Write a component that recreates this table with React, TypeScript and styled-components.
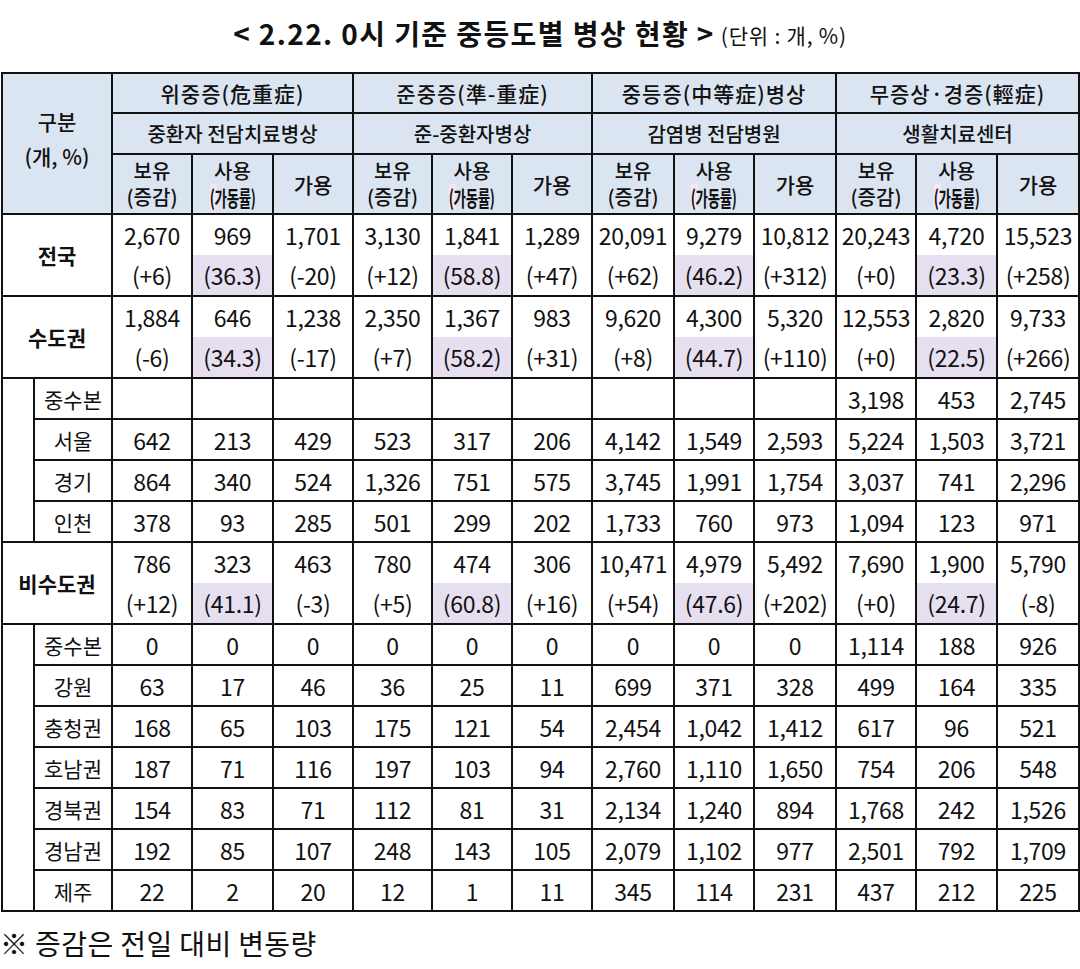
import React from 'react';
import styled, { createGlobalStyle } from 'styled-components';

const GlobalStyle = createGlobalStyle`
  html, body { margin: 0; padding: 0; background: #ffffff; }
  body { font-family: "Noto Sans CJK KR", "Noto Sans", sans-serif; color: #111111; }
`;

const Page = styled.div`
  width: 1080px;
  height: 969px;
  display: flex;
  flex-direction: column;
  overflow: hidden;
`;

const Title = styled.h1`
  margin: 0;
  height: 72px;
  box-sizing: border-box;
  padding: 0 0 7px 0;
  display: flex;
  align-items: center;
  justify-content: center;
  gap: 6px;
  font-size: 28px;
  font-weight: 700;
  letter-spacing: 1.4px;
  color: #111;
`;

const Unit = styled.span`
  font-size: 21px;
  font-weight: 400;
  letter-spacing: 0.8px;
  position: relative;
  top: 2px;
`;

const Table = styled.table`
  border-collapse: collapse;
  table-layout: fixed;
  width: 1077px;
  margin-left: 1px;
  border: 2px solid #111;
`;

const Col = styled.col<{ $w: number }>`
  width: ${(p) => p.$w}px;
`;

const HeadRow = styled.tr<{ $h: number }>`
  height: ${(p) => p.$h}px;
`;

const Th = styled.th<{ $size?: number; $ls?: number }>`
  background: #dbe5f1;
  border: 2px solid #111;
  padding: 0;
  font-size: ${(p) => p.$size ?? 21}px;
  letter-spacing: ${(p) => p.$ls ?? 0}px;
  font-weight: 500;
  text-align: center;
  vertical-align: middle;
  line-height: 1.15;
  white-space: nowrap;
`;

const Stack = styled.div`
  display: flex;
  flex-direction: column;
  align-items: center;
  line-height: 26px;
  font-size: 20px;
`;

const Squeeze = styled.span`
  display: inline-block;
  font-size: 21px;
  font-weight: 700;
  transform: scaleX(0.64);
  letter-spacing: -0.5px;
  background: linear-gradient(90deg, #f6e6f3 0 16%, transparent 16%);
`;

const Row = styled.tr<{ $h: number }>`
  height: ${(p) => p.$h}px;
`;

const Label = styled.td<{ $bold?: boolean }>`
  border: 2px solid #111;
  padding: 0;
  text-align: center;
  vertical-align: middle;
  font-size: 21px;
  font-weight: ${(p) => (p.$bold ? 700 : 400)};
  white-space: nowrap;
`;

const Spacer = styled.td`
  border: 2px solid #111;
  padding: 0;
`;

const Cell = styled.td`
  border: 2px solid #111;
  padding: 0;
  text-align: center;
  vertical-align: middle;
  font-size: 23px;
  font-weight: 400;
  white-space: nowrap;
  letter-spacing: -0.3px;
`;

const CellLine = styled.div<{ $hl?: boolean }>`
  height: 40px;
  line-height: 40px;
  background: ${(p) => (p.$hl ? '#e6dff0' : 'transparent')};
`;

const Note = styled.div`
  margin-top: 13px;
  font-size: 28px;
  font-weight: 400;
  letter-spacing: 0.4px;
  line-height: 36px;
`;

type Pair = [string, string];

const groups = [
  { name: '위중증(危重症)', sub: '중환자 전담치료병상' },
  { name: '준중증(準-重症)', sub: '준-중환자병상' },
  { name: '중등증(中等症)병상', sub: '감염병 전담병원' },
  { name: '무증상·경증(輕症)', sub: '생활치료센터' },
];

const colWidths = [32, 78, 80, 81, 80, 79, 80, 80, 82, 80, 82, 80, 81, 82];

const bigRows: { label: string; data: Pair[] }[] = [
  {
    label: '전국',
    data: [
      ['2,670', '(+6)'], ['969', '(36.3)'], ['1,701', '(-20)'],
      ['3,130', '(+12)'], ['1,841', '(58.8)'], ['1,289', '(+47)'],
      ['20,091', '(+62)'], ['9,279', '(46.2)'], ['10,812', '(+312)'],
      ['20,243', '(+0)'], ['4,720', '(23.3)'], ['15,523', '(+258)'],
    ],
  },
  {
    label: '수도권',
    data: [
      ['1,884', '(-6)'], ['646', '(34.3)'], ['1,238', '(-17)'],
      ['2,350', '(+7)'], ['1,367', '(58.2)'], ['983', '(+31)'],
      ['9,620', '(+8)'], ['4,300', '(44.7)'], ['5,320', '(+110)'],
      ['12,553', '(+0)'], ['2,820', '(22.5)'], ['9,733', '(+266)'],
    ],
  },
  {
    label: '비수도권',
    data: [
      ['786', '(+12)'], ['323', '(41.1)'], ['463', '(-3)'],
      ['780', '(+5)'], ['474', '(60.8)'], ['306', '(+16)'],
      ['10,471', '(+54)'], ['4,979', '(47.6)'], ['5,492', '(+202)'],
      ['7,690', '(+0)'], ['1,900', '(24.7)'], ['5,790', '(-8)'],
    ],
  },
];

const capitalSubs: { label: string; data: string[] }[] = [
  { label: '중수본', data: ['', '', '', '', '', '', '', '', '', '3,198', '453', '2,745'] },
  { label: '서울', data: ['642', '213', '429', '523', '317', '206', '4,142', '1,549', '2,593', '5,224', '1,503', '3,721'] },
  { label: '경기', data: ['864', '340', '524', '1,326', '751', '575', '3,745', '1,991', '1,754', '3,037', '741', '2,296'] },
  { label: '인천', data: ['378', '93', '285', '501', '299', '202', '1,733', '760', '973', '1,094', '123', '971'] },
];

const otherSubs: { label: string; data: string[] }[] = [
  { label: '중수본', data: ['0', '0', '0', '0', '0', '0', '0', '0', '0', '1,114', '188', '926'] },
  { label: '강원', data: ['63', '17', '46', '36', '25', '11', '699', '371', '328', '499', '164', '335'] },
  { label: '충청권', data: ['168', '65', '103', '175', '121', '54', '2,454', '1,042', '1,412', '617', '96', '521'] },
  { label: '호남권', data: ['187', '71', '116', '197', '103', '94', '2,760', '1,110', '1,650', '754', '206', '548'] },
  { label: '경북권', data: ['154', '83', '71', '112', '81', '31', '2,134', '1,240', '894', '1,768', '242', '1,526'] },
  { label: '경남권', data: ['192', '85', '107', '248', '143', '105', '2,079', '1,102', '977', '2,501', '792', '1,709'] },
  { label: '제주', data: ['22', '2', '20', '12', '1', '11', '345', '114', '231', '437', '212', '225'] },
];

const BigRow: React.FC<{ label: string; data: Pair[]; h: number }> = ({ label, data, h }) => (
  <Row $h={h}>
    <Label colSpan={2} $bold>{label}</Label>
    {data.map(([a, b], i) => (
      <Cell key={i}>
        <CellLine>{a}</CellLine>
        <CellLine $hl={i % 3 === 1}>{b}</CellLine>
      </Cell>
    ))}
  </Row>
);

const SubRows: React.FC<{ rows: { label: string; data: string[] }[] }> = ({ rows }) => (
  <>
    {rows.map((r, ri) => (
      <Row $h={41} key={ri}>
        {ri === 0 && <Spacer rowSpan={rows.length} />}
        <Label>{r.label}</Label>
        {r.data.map((v, i) => (
          <Cell key={i}>{v}</Cell>
        ))}
      </Row>
    ))}
  </>
);

export default function App() {
  return (
    <Page>
      <GlobalStyle />
      <Title>
        &lt; 2.22. 0시 기준 중등도별 병상 현황 &gt;<Unit>(단위 : 개, %)</Unit>
      </Title>
      <Table>
        <colgroup>
          {colWidths.map((w, i) => (
            <Col key={i} $w={w} />
          ))}
        </colgroup>
        <thead>
          <HeadRow $h={40}>
            <Th colSpan={2} rowSpan={3} $size={21}>
              구분
              <br />
              <span style={{ lineHeight: '44px' }}>(개, %)</span>
            </Th>
            {groups.map((g) => (
              <Th key={g.name} colSpan={3} $ls={1}>{g.name}</Th>
            ))}
          </HeadRow>
          <HeadRow $h={41}>
            {groups.map((g) => (
              <Th key={g.sub} colSpan={3} $size={20}>{g.sub}</Th>
            ))}
          </HeadRow>
          <HeadRow $h={60}>
            {groups.map((g) => (
              <React.Fragment key={g.name}>
                <Th>
                  <Stack>
                    <span>보유</span>
                    <span>(증감)</span>
                  </Stack>
                </Th>
                <Th>
                  <Stack>
                    <span>사용</span>
                    <Squeeze>(가동률)</Squeeze>
                  </Stack>
                </Th>
                <Th>가용</Th>
              </React.Fragment>
            ))}
          </HeadRow>
        </thead>
        <tbody>
          <BigRow label={bigRows[0].label} data={bigRows[0].data} h={81} />
          <BigRow label={bigRows[1].label} data={bigRows[1].data} h={80} />
          <SubRows rows={capitalSubs} />
          <BigRow label={bigRows[2].label} data={bigRows[2].data} h={80} />
          <SubRows rows={otherSubs} />
        </tbody>
      </Table>
      <Note>※ 증감은 전일 대비 변동량</Note>
    </Page>
  );
}
